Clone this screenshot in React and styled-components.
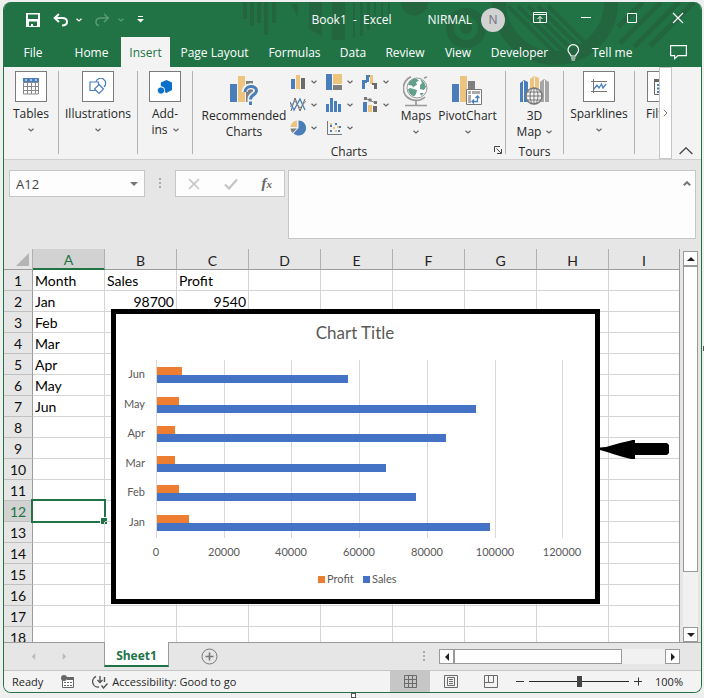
import React, { useState } from 'react'
import styled, { createGlobalStyle } from 'styled-components'

const GlobalStyle = createGlobalStyle`
  * { box-sizing: border-box; }
  body {
    margin: 0;
    background: #efefef;
    font-family: "Open Sans", "Noto Sans", sans-serif;
    font-size: 12px;
    color: #262626;
  }
  button, input, textarea { font: inherit; color: inherit; }
  button { padding: 0; border: 0; background: none; cursor: pointer; }
  svg { display: block; flex: none; }
`

const Page = styled.div`
  position: relative;
  display: flex;
  height: 100vh;
  padding: 2px 2px 5px 3px;
`

const Window = styled.div`
  flex: 1;
  min-width: 0;
  display: flex;
  flex-direction: column;
  border: 1px solid #217346;
  border-top: 0;
  border-radius: 8px;
  overflow: hidden;
  background: #e6e6e6;
`

/* ---------- title bar and tabs ---------- */

const Header = styled.header`
  position: relative;
  background: #217346;
  color: #fff;
`

const Decoration = styled.svg`
  position: absolute;
  top: 0;
  right: 0;
`

const TitleBar = styled.div`
  position: relative;
  display: flex;
  align-items: center;
  height: 35px;
  padding: 0 16px 0 22px;
`

const QuickAccess = styled.div`
  display: flex;
  align-items: center;
  gap: 6px;
  flex: 1;
`

const QuickButton = styled.button`
  display: flex;
  align-items: center;
  gap: 8px;
  margin-right: 7px;
  color: ${props => (props.$dim ? '#5b9a77' : '#fff')};
`

const DocTitle = styled.div`
  white-space: pre;
  margin-right: 36px;
`

const Account = styled.button`
  display: flex;
  align-items: center;
  gap: 9px;
  color: #fff;
`

const Avatar = styled.span`
  width: 24px;
  height: 24px;
  border-radius: 50%;
  background: #d2d2d2;
  color: #6b6f80;
  line-height: 24px;
`

const WindowButtons = styled.div`
  display: flex;
  gap: 32px;
  margin: 0 0 3px 28px;
`

const Tabs = styled.nav`
  position: relative;
  display: flex;
  align-items: stretch;
  height: 30px;
  padding: 0 14px 0 0;
`

const Tab = styled.button`
  width: ${props => props.$width}px;
  white-space: nowrap;
  color: ${props => (props.$active ? '#217346' : '#fff')};
  background: ${props => (props.$active ? '#f3f3f3' : 'transparent')};
`

const TellMe = styled.button`
  display: flex;
  align-items: center;
  gap: 12px;
  margin: 0 auto 0 10px;
  color: #fff;
`

/* ---------- ribbon ---------- */

const Ribbon = styled.div`
  display: flex;
  height: 93px;
  background: #f3f3f3;
  border-bottom: 1px solid #d0d0d0;
`

const Group = styled.section`
  display: flex;
  flex-direction: column;
  align-items: center;
  flex: none;
  width: ${props => props.$width}px;
  margin: 4px 0 5px;
  border-right: 1px solid #b2b2b2;
`

const LastGroup = styled.section`
  flex: 1;
  min-width: 0;
  overflow: hidden;
  margin-top: 4px;
  padding-left: 11px;
`

const GroupRow = styled.div`
  display: flex;
  flex: 1;
  align-self: stretch;
`

const GroupLabel = styled.div`
  position: relative;
  align-self: stretch;
  height: 12px;
  line-height: 20px;
  margin-top: -12px;
  text-align: center;
`

const Launcher = styled.button`
  position: absolute;
  right: 3px;
  top: 4px;
`

const BigButton = styled.button`
  display: flex;
  flex-direction: column;
  align-items: center;
  flex: none;
  width: ${props => (props.$width ? props.$width + 'px' : 'auto')};
  padding-top: ${props => (props.$plain ? 5 : 0)}px;
  padding-left: ${props => props.$indent || 0}px;
  line-height: 16px;
`

const IconBox = styled.span`
  display: grid;
  place-items: center;
  width: 32px;
  height: 31px;
  border: 1px solid #7b7b7b;
  background: #fff;
  margin-bottom: 4px;
`

const PlainIcon = styled.span`
  height: 32px;
`

const LabelLine = styled.span`
  display: flex;
  align-items: center;
  gap: 5px;
  min-height: 16px;
  white-space: nowrap;
`

const ChartTypes = styled.div`
  display: grid;
  grid-template-columns: repeat(3, 36px);
  grid-auto-rows: 23px;
  align-content: start;
  margin-top: -1px;
`

const SmallButton = styled.button`
  display: flex;
  align-items: center;
  gap: 5px;
`

const RibbonScroll = styled.button`
  width: 13px;
  flex: none;
  border: 1px solid #c6c6c6;
  background: #fff;
  display: grid;
  place-items: center;
`

const RibbonCollapse = styled.button`
  display: flex;
  align-items: flex-end;
  padding: 0 8px 4px 7px;
`

/* ---------- formula bar ---------- */

const FormulaBar = styled.div`
  display: flex;
  align-items: flex-start;
  height: 89px;
  padding: 10px 5px 0;
  color: #444;
`

const NameBox = styled.div`
  display: flex;
  align-items: center;
  width: 136px;
  height: 27px;
  padding-right: 6px;
  border: 1px solid #c6c6c6;
  background: #fdfdfd;
`

const NameInput = styled.input`
  flex: 1;
  min-width: 0;
  border: 0;
  outline: 0;
  padding: 0 6px;
  background: none;
  font-size: 13px;
`

const Grip = styled.svg`
  margin: 8px 14px;
`

const FormulaButtons = styled.div`
  display: flex;
  align-items: center;
  justify-content: space-between;
  width: 110px;
  height: 27px;
  padding: 0 12px;
  margin-right: 3px;
  border: 1px solid #c6c6c6;
  background: #fdfdfd;
`

const FxButton = styled.button`
  font: italic bold 15px "Liberation Serif", serif;
  color: #666;

  small { font-size: 11px; }
`

const FormulaField = styled.div`
  display: flex;
  flex: 1;
  align-items: flex-start;
  height: 69px;
  border: 1px solid #c6c6c6;
  background: #fdfdfd;

  textarea {
    flex: 1;
    min-width: 0;
    height: 100%;
    border: 0;
    outline: 0;
    resize: none;
    background: none;
  }
  button { padding: 10px 4px; }
`

/* ---------- sheet ---------- */

const SheetArea = styled.main`
  position: relative;
  display: flex;
  flex: 1;
  min-height: 0;
`

const GridClip = styled.div`
  flex: 1;
  min-width: 0;
  overflow: hidden;
  border-right: 1px solid #9b9b9b;
`

const Grid = styled.table`
  width: 100%;
  table-layout: fixed;
  border-collapse: separate;
  border-spacing: 0;
  background: #fff;
  color: #000;
  font-family: Lato, sans-serif;
  font-size: 14px;
  line-height: 18px;
`

const Corner = styled.th`
  width: 29px;
  height: 21px;
  padding: 0 3px 3px 0;
  vertical-align: bottom;
  background: #e6e6e6;
  border-right: 1px solid #b0b0b0;
  border-bottom: 1px solid #9b9b9b;

  svg { margin-left: auto; }
`

const ColHead = styled.th`
  width: ${props => (props.$last ? 'auto' : '72px')};
  height: 21px;
  padding: 2px 0 0;
  font-weight: 400;
  line-height: 17px;
  color: ${props => (props.$active ? '#217346' : '#222')};
  background: ${props => (props.$active ? '#d2d2d2' : '#e6e6e6')};
  border-right: ${props => (props.$last ? '0' : '1px solid #b0b0b0')};
  border-bottom: ${props => (props.$active ? '2px solid #217346' : '1px solid #9b9b9b')};
`

const RowHead = styled.th`
  height: 21px;
  padding: 2px 0 0;
  font-weight: 400;
  color: ${props => (props.$active ? '#217346' : '#111')};
  background: ${props => (props.$active ? '#d2d2d2' : '#e6e6e6')};
  border-right: 1px solid #9b9b9b;
  border-bottom: 1px solid #c0c0c0;
`

const Cell = styled.td`
  position: relative;
  height: 21px;
  padding: 2px 2px 0;
  text-align: ${props => (props.$number ? 'right' : 'left')};
  border-right: 1px solid #d4d4d4;
  border-bottom: 1px solid #d4d4d4;

  &:last-child { border-right: 0; }
`

const Selection = styled.div`
  position: absolute;
  inset: -2px;
  border: 2px solid #217346;

  &::after {
    content: "";
    position: absolute;
    right: -3px;
    bottom: -3px;
    width: 6px;
    height: 6px;
    background: #217346;
    border: solid #fff;
    border-width: 1px 0 0 1px;
  }
`

const ChartObject = styled.figure`
  position: absolute;
  left: 107px;
  top: 60px;
  margin: 0;
  border: 5px solid #000;
  background: #fff;
`

const ChartText = styled.text`
  font-family: Lato, sans-serif;
  font-size: ${props => props.$size || 11}px;
  fill: #595959;
`

const Pointer = styled.svg`
  position: absolute;
  left: 596px;
  top: 190px;
`

const Scroller = styled.div`
  display: flex;
  flex-direction: ${props => (props.$vertical ? 'column' : 'row')};
  background: #f1f1f1;
`

const VerticalSlot = styled.div`
  display: flex;
  width: 21px;
  padding: 2px 3px 0;

  ${Scroller} { width: 15px; }
`

const ScrollButton = styled.button`
  display: grid;
  place-items: center;
  width: 15px;
  height: 15px;
  border: 1px solid #999;
  background: #fff;
`

const Thumb = styled.div`
  flex: ${props => props.$size};
  border: 1px solid #999;
  background: #fff;
`

const Track = styled.div`
  flex: ${props => props.$size};
`

const SheetBar = styled.div`
  display: flex;
  align-items: center;
  height: 28px;
  padding-right: 21px;
  border-top: 1px solid #9b9b9b;
`

const SheetNav = styled.div`
  display: flex;
  gap: 24px;
  width: 100px;
  padding-left: 26px;
`

const SheetTab = styled.button`
  align-self: flex-start;
  width: 65px;
  height: 25px;
  margin-top: -1px;
  padding-top: 3px;
  background: #fff;
  border: solid #9b9b9b;
  border-width: 0 1px;
  border-bottom: 2px solid #217346;
  color: #217346;
  font-weight: 700;
`

const AddSheet = styled.button`
  margin: 0 auto 0 32px;
`

const HScroller = styled(Scroller)`
  width: 241px;
`

/* ---------- status bar ---------- */

const StatusBar = styled.footer`
  display: flex;
  align-items: center;
  height: 22px;
  border-top: 1px solid #c6c6c6;
  background: #f3f3f3;
  font-size: 11px;
  padding: 0 18px 0 8px;
  white-space: nowrap;
`

const StatusItem = styled.button`
  display: flex;
  align-items: center;
  gap: 4px;
  margin-right: 18px;
`

const Views = styled.div`
  display: flex;
  align-self: stretch;
  margin-left: auto;
`

const ViewButton = styled.button`
  display: grid;
  place-items: center;
  width: 40px;
  background: ${props => (props.$active ? '#c6c6c6' : 'transparent')};
`

const Zoom = styled.div`
  display: flex;
  align-items: center;
  gap: 4px;
  margin: 0 12px 0 5px;
`

const ZoomRange = styled.input`
  appearance: none;
  width: 100px;
  height: 12px;
  margin: 0;
  background: linear-gradient(#262626, #262626) center / 100% 1px no-repeat;

  &::-webkit-slider-thumb {
    appearance: none;
    width: 5px;
    height: 11px;
    background: #444;
  }
`

const EdgeHandle = styled.span`
  position: absolute;
  width: 5px;
  height: 5px;
  border: 1px solid #555;
  background: #fff;
  ${props => (props.$side === 'bottom' ? 'left: 50%; margin-left: -1px; bottom: 0;' : 'right: -4px; top: 346px;')}
`

/* ---------- icons ---------- */

const BLUE = '#4a7ebb'
const GOLD = '#edc47d'
const GRAY = '#7f7f7f'

const Chevron = ({ color = '#666' }) => (
  <svg width="6" height="4" viewBox="0 0 6 4" fill="none" stroke={color} strokeWidth="1.2">
    <path d="M.5 .7 3 3 5.5 .7" />
  </svg>
)

const Triangle = ({ dir, color = '#222', size = 8 }) => {
  const paths = {
    up: 'M0 6 4 2 8 6z',
    down: 'M0 2 4 6 8 2z',
    left: 'M6 0 2 4 6 8z',
    right: 'M2 0 6 4 2 8z',
  }
  return (
    <svg width={size} height={size} viewBox="0 0 8 8" fill={color}>
      <path d={paths[dir]} />
    </svg>
  )
}

const SaveIcon = () => (
  <svg width="14" height="14" viewBox="0 0 14 14">
    <path fill="#fff" fillRule="evenodd" d="M0 0h14v14H0zM2 1.5V6h10V1.5zM3 8.5V13h2v-2h2v2h4V8.5z" />
  </svg>
)

const UndoIcon = () => (
  <svg width="15" height="14" viewBox="0 0 15 14" fill="none" stroke="currentColor" strokeWidth="2">
    <path d="M6 1 1.7 5 6 9M2 5h7.2c3 0 4.8 1.5 4.8 3.8S12 12.5 9 12.5" />
  </svg>
)

const RedoIcon = () => (
  <svg width="15" height="14" viewBox="0 0 15 14" fill="none" stroke="currentColor" strokeWidth="1.5">
    <path d="M9 1 13.3 5 9 9M13 5H5.8C2.8 5 1 6.5 1 8.8S2.5 12.5 4 12.5" />
  </svg>
)

const TableIcon = () => (
  <svg width="16" height="17" viewBox="0 0 16 17">
    <path fill="#fff" stroke="#888" d="M.5 4.5h15v11.5H.5zM4.500 5v11M8.5 5v11M12.5 5v11M1 8.5h14M1 12.5h14" />
    <path fill={BLUE} d="M0 0h16v4H0z" />
    <path fill="#fff" d="M2 1.5h2v1H2zM7 1.5h2v1H7zM12 1.5h2v1h-2z" />
  </svg>
)

const ShapesIcon = () => (
  <svg width="18" height="17" viewBox="0 0 18 17" fill="#fff" stroke={BLUE} strokeWidth="1.2">
    <path d="M7 3.5A5 5 0 1 1 15 9" />
    <path d="M1 4h8.5v8.5H1z" />
    <path d="M10 6.5 14.5 11 10 15.5 5.5 11z" />
  </svg>
)

const AddinIcon = () => (
  <svg width="16" height="16" viewBox="0 0 16 16" fill="#0a70c8">
    <path d="M9.5 1 15 3.5V11l-5.5 3-2.5-1.5V9L3.8 7V3.5z" />
    <circle cx="4" cy="11.5" r="3.7" stroke="#fff" strokeWidth="1" />
  </svg>
)

const RecommendedIcon = () => (
  <svg width="29" height="30" viewBox="0 0 29 30">
    <path fill={BLUE} d="M0 8h7v18H0z" />
    <path fill={GOLD} d="M8 0h7v26H8z" />
    <path fill={GRAY} d="M16 5h7v21h-7z" />
    <g fill="none" stroke="#f3f3f3" strokeWidth="6">
      <path d="M14.5 16c0-7.500 12-7.500 12-1.500 0 4.500-6 4-6 8.5v6" />
    </g>
    <g fill="none" stroke={BLUE} strokeWidth="3">
      <path d="M15 16c0-7 11.500-7 11.500-1.500 0 4.500-6 4-6 9M20.500 25.500v3.500" />
    </g>
  </svg>
)

const ColumnIcon = () => (
  <svg width="16" height="16" viewBox="0 0 16 16">
    <path fill={BLUE} d="M1 5h4v10H1z" />
    <path fill={GOLD} d="M6 1h4v14H6z" />
    <path fill="#6b6b6b" d="M11 4h4v11h-4z" />
  </svg>
)

const TreemapIcon = () => (
  <svg width="16" height="16" viewBox="0 0 16 16">
    <path fill={BLUE} d="M0 0h6v16H0z" />
    <path fill={GOLD} d="M7 0h9v10H7z" />
    <path fill={GRAY} d="M7 11h9v5H7z" />
  </svg>
)

const WaterfallIcon = () => (
  <svg width="16" height="16" viewBox="0 0 16 16">
    <path fill={BLUE} d="M0 6h3v9H0zM3 6h2v3H3zM4 1h3v7H4z" />
    <path fill={GOLD} d="M8 1h3v9H8z" />
    <path fill="#6b6b6b" d="M7 1h1v2H7zM10 9h5v2h-5zM12 9h3v6h-3z" />
  </svg>
)

const LineIcon = () => (
  <svg width="16" height="16" viewBox="0 0 16 16" fill="none">
    <path stroke="#666" d="M1 14 5 1l5 13 5-12" />
    <path stroke={BLUE} strokeWidth="1.3" d="M0 5l4 8 6-11 5 11" />
    <path stroke="#888" d="M0 10l5-6 5 7 6-7" />
  </svg>
)

const HistogramIcon = () => (
  <svg width="16" height="16" viewBox="0 0 16 16" fill={BLUE}>
    <path d="M0 7h3v8H0zM4 1h3v14H4zM8 4h3v11H8zM12 7h3v8h-3z" />
  </svg>
)

const ComboIcon = () => (
  <svg width="16" height="16" viewBox="0 0 16 16">
    <path fill={BLUE} d="M1 5h4v10H1z" />
    <path fill={GOLD} d="M6 8h4v7H6z" />
    <path fill="#6b6b6b" d="M11 9h4v6h-4z" />
    <path fill="none" stroke="#777" d="M3 1.5 8 3 13 6" />
    <path fill="#777" d="M2 0h3v3H2zM6.500 1.5h3v3h-3zM12 4h3v3h-3z" />
  </svg>
)

const PieIcon = () => (
  <svg width="16" height="16" viewBox="0 0 16 16">
    <path fill={BLUE} d="M8.5 .5a7.5 7.5 0 1 1-5 13l5-5.5z" />
    <path fill={GOLD} d="M7 .5V7H.5A7 7 0 0 1 7 .5z" />
    <path fill={GRAY} d="M.5 8.5H7l-4.5 4.5a7 7 0 0 1-2-4.500z" />
  </svg>
)

const ScatterIcon = () => (
  <svg width="16" height="16" viewBox="0 0 16 16">
    <path fill="none" stroke="#777" d="M1.5 1v13.5H16" />
    <path fill={BLUE} d="M4 5h2v2H4zM9 3h2v2H9zM4 10h2v2H4zM12 10h2v2h-2zM13 6h2v2h-2z" />
    <path fill={GOLD} d="M4 3h2v2H4zM7 7h2v2H7zM11 6h2v2h-2zM9 10h2v2H9z" />
  </svg>
)

const GlobeIcon = () => (
  <svg width="26" height="32" viewBox="0 0 26 32">
    <path fill="none" stroke="#999" strokeWidth="1.7" d="M8 .8 5 2.500C-1.500 8-.5 17 4 21s13 5 18 0M13 25v5M2 29.500h22M21 2l3-1" />
    <circle cx="14" cy="12" r="10" fill="#fff" stroke="#999" />
    <path fill="#63a08a" d="M5 9q2-6 8-6.500l3 2-3 2 1 2-4 3-1-2zM17 3q5 2.500 6 8l-2 3-4-1 0-4 2-2zM7 12l7 2-1 4-2 2.500q-5-2-6-7zM17 17h4l-3 3z" />
  </svg>
)

const PivotIcon = () => (
  <svg width="31" height="30" viewBox="0 0 31 30">
    <path fill={BLUE} d="M0 8h7v18H0z" />
    <path fill={GOLD} d="M8 0h7v26H8z" />
    <path fill={GRAY} d="M16 5h7v10h-7z" />
    <path fill="#fff" stroke="#777" d="M14.5 13.5h15v15h-15z" />
    <path fill="#aaa" d="M16 15h3v3h-3zM20 15h8v3h-8zM16 19h3v8h-3z" />
    <path fill="none" stroke={BLUE} strokeWidth="1.3" d="M20 25.5h5.5V20M22 23.5l-2 2 2 2M23.5 22l2-2 2 2" />
  </svg>
)

const MapIcon = () => (
  <svg width="31" height="30" viewBox="0 0 31 30">
    <path fill={BLUE} d="M1 7l4-3 4 2v20H1z" />
    <path fill={GOLD} d="M11 3l4-3 5 2v22h-9z" />
    <path fill="#a5a5a5" d="M21 6l4-3 5 3v20h-9z" />
    <path stroke="#f3f3f3" d="M4.500 5v21M25.5 4v22M15.500 1v12" />
    <circle cx="15" cy="20" r="8" fill="#f3f3f3" stroke="#777" strokeWidth="1.4" />
    <path fill="none" stroke="#777" d="M15 12v16M7 20h16M8.5 16h13M8.5 24h13" />
    <ellipse cx="15" cy="20" rx="4" ry="8" fill="none" stroke="#777" />
  </svg>
)

const SparkIcon = () => (
  <svg width="18" height="16" viewBox="0 0 18 16" fill="none">
    <path stroke="#777" d="M3.5 0v14M1 2.5h16M1 12.5h16" />
    <path stroke={BLUE} strokeWidth="1.3" d="M4 10l3-4 2 3 2.5-4 1.5 4 3-4" />
  </svg>
)

const FilterIcon = () => (
  <svg width="18" height="16" viewBox="0 0 18 16" fill="none">
    <path stroke="#666" d="M.5 .5h12v15H.5z" />
    <path fill="#666" d="M0 0h13v3H0z" />
    <path stroke={BLUE} strokeWidth="2" d="M3 6h8M3 9.5h8M3 13h8" />
  </svg>
)

const ViewIcon = ({ d }) => (
  <svg width="15" height="14" viewBox="0 0 15 14" fill="none" stroke="#6b6b6b">
    <path d={d} />
  </svg>
)

const HeaderArt = () => (
  <Decoration width="462" height="65" viewBox="239 2 462 65" fill="#23653f">
    <path d="M243 2h4v17h-4zM250 2h4v24h-4zM257 2h4v21h-4zM264 2h4v33h-4zM272 2h4v21h-4zM291 4h7v13zM309 2h13v34l-13-7zM332 2h13v38h-13z" />
    <path d="M353 2h2v36h-2zM360 2h3v34h-3zM367 2h3v28h-3zM374 2h2v24h-2zM381 2h2v22h-2zM388 2h2v17h-2zM401 2h27a13.5 13.5 0 0 1-27 0z" />
    <circle cx="466" cy="28" r="16" fill="none" stroke="#23653f" strokeWidth="8" />
    <circle cx="466" cy="28" r="6" />
    <circle cx="555" cy="2" r="56" fill="none" stroke="#23653f" strokeWidth="14" />
    <path fill="none" stroke="#23653f" strokeWidth="4" d="M508 6 556 54M518 6 566 54M528 6 574 52M538 6 581 49M548 6 586 44" />
    <path fill="none" stroke="#23653f" strokeWidth="5" d="M643 2 618 27M661 2 620 43M679 2 634 47M694 2 650 46" />
  </Decoration>
)

/* ---------- data ---------- */

const tabs = [
  ['File', 58], ['Home', 59], ['Insert', 49], ['Page Layout', 89], ['Formulas', 71],
  ['Data', 46], ['Review', 58], ['View', 48], ['Developer', 75],
]

const months = ['Jan', 'Feb', 'Mar', 'Apr', 'May', 'Jun']
const sales = [98700, 76800, 68000, 85600, 94500, 56700]
const profit = [9540, 6500, 5300, 5300, 6500, 7400]

const columns = ['A', 'B', 'C', 'D', 'E', 'F', 'G', 'H', 'I']
const cells = {
  A1: 'Month', B1: 'Sales', C1: 'Profit',
  A2: 'Jan', B2: 98700, C2: 9540,
  A3: 'Feb', A4: 'Mar', A5: 'Apr', A6: 'May', A7: 'Jun',
}

const chartTypes = [
  ['Column', ColumnIcon], ['Hierarchy', TreemapIcon], ['Waterfall', WaterfallIcon],
  ['Line', LineIcon], ['Statistic', HistogramIcon], ['Combo', ComboIcon],
  ['Pie', PieIcon], ['Scatter', ScatterIcon],
]

const BarChart = () => {
  const x = value => 40 + Math.round((value * 67.7) / 20000)
  const ticks = [0, 20000, 40000, 60000, 80000, 100000, 120000]

  return (
    <svg width="479" height="285" viewBox="0 0 479 285">
      <ChartText x="239" y="25" $size={17} textAnchor="middle">Chart Title</ChartText>
      {ticks.map(tick => (
        <g key={tick}>
          <path stroke="#d9d9d9" d={`M${x(tick) + 0.5} 46V224`} />
          <ChartText x={x(tick)} y="242" textAnchor="middle">{tick}</ChartText>
        </g>
      ))}
      {months.map((month, i) => {
        const top = 201 - Math.round(i * 29.5)
        return (
          <g key={month}>
            <ChartText x="29" y={top + 11} textAnchor="end">{month}</ChartText>
            <rect x="41" y={top} width={x(profit[i]) - 40} height="8" fill="#ed7d31" />
            <rect x="41" y={top + 8} width={x(sales[i]) - 41} height="8" fill="#4472c4" />
          </g>
        )
      })}
      <rect x="202" y="262" width="7" height="7" fill="#ed7d31" />
      <ChartText x="211" y="269">Profit</ChartText>
      <rect x="247" y="262" width="7" height="7" fill="#4472c4" />
      <ChartText x="256" y="269">Sales</ChartText>
    </svg>
  )
}

const App = () => {
  const [activeTab, setActiveTab] = useState('Insert')
  const [active, setActive] = useState('A12')
  const [zoom, setZoom] = useState(100)
  const [formula, setFormula] = useState('')

  const activeCol = active[0]
  const activeRow = Number(active.slice(1))

  return (
    <Page>
      <GlobalStyle />
      <Window>
        <Header>
          <HeaderArt />
          <TitleBar>
            <QuickAccess>
              <QuickButton aria-label="Save"><SaveIcon /></QuickButton>
              <QuickButton aria-label="Undo"><UndoIcon /><Chevron color="#fff" /></QuickButton>
              <QuickButton aria-label="Redo" $dim><RedoIcon /><Chevron color="#5b9a77" /></QuickButton>
              <QuickButton aria-label="Customize">
                <svg width="7" height="7" viewBox="0 0 7 7" fill="#fff"><path d="M1 0h5v1H1zM0 3h7L3.5 6.5z" /></svg>
              </QuickButton>
            </QuickAccess>
            <DocTitle>Book1  -  Excel</DocTitle>
            <Account>NIRMAL <Avatar>N</Avatar></Account>
            <WindowButtons>
              <button aria-label="Ribbon display">
                <svg width="14" height="12" viewBox="0 0 14 12" fill="none" stroke="#fff"><path d="M.5 .5h13v10H.5zM1 2.5h12M7 10V4.5M4.5 7 7 4.5 9.5 7" /></svg>
              </button>
              <button aria-label="Minimize">
                <svg width="14" height="12" viewBox="0 0 14 12" stroke="#fff"><path d="M2 5.5h10" /></svg>
              </button>
              <button aria-label="Maximize">
                <svg width="14" height="12" viewBox="0 0 14 12" fill="none" stroke="#fff"><path d="M2.5 1.5h9v9h-9z" /></svg>
              </button>
              <button aria-label="Close">
                <svg width="14" height="12" viewBox="0 0 14 12" fill="none" stroke="#fff" strokeWidth="1.2"><path d="M2 1l10 10M12 1 2 11" /></svg>
              </button>
            </WindowButtons>
          </TitleBar>
          <Tabs>
            {tabs.map(([name, width]) => (
              <Tab key={name} $width={width} $active={name === activeTab} onClick={() => setActiveTab(name)}>
                {name}
              </Tab>
            ))}
            <TellMe>
              <svg width="13" height="17" viewBox="0 0 13 17" fill="none" stroke="#fff" strokeWidth="1.2">
                <path d="M4 12c0-2-3-3-3-6a5.3 5.3 0 0 1 10.6 0c0 3-3 4-3 6zM4 14h4.6M4.500 16h3.5" />
              </svg>
              Tell me
            </TellMe>
            <button aria-label="Comments">
              <svg width="17" height="16" viewBox="0 0 17 16" fill="none" stroke="#fff" strokeWidth="1.2">
                <path d="M.6 1.6h15.8v10H8l-3.4 3v-3h-4z" />
              </svg>
            </button>
          </Tabs>
        </Header>

        <Ribbon>
          <Group $width={55}>
            <BigButton>
              <IconBox><TableIcon /></IconBox>
              <LabelLine>Tables</LabelLine>
              <LabelLine><Chevron /></LabelLine>
            </BigButton>
          </Group>
          <Group $width={79}>
            <BigButton>
              <IconBox><ShapesIcon /></IconBox>
              <LabelLine>Illustrations</LabelLine>
              <LabelLine><Chevron /></LabelLine>
            </BigButton>
          </Group>
          <Group $width={55}>
            <BigButton>
              <IconBox><AddinIcon /></IconBox>
              <LabelLine>Add-</LabelLine>
              <LabelLine>ins <Chevron /></LabelLine>
            </BigButton>
          </Group>
          <Group $width={313}>
            <GroupRow>
              <BigButton $plain $width={97} $indent={5}>
                <PlainIcon><RecommendedIcon /></PlainIcon>
                <LabelLine>Recommended</LabelLine>
                <LabelLine>Charts</LabelLine>
              </BigButton>
              <ChartTypes>
                {chartTypes.map(([name, Icon]) => (
                  <SmallButton key={name} aria-label={name}><Icon /><Chevron /></SmallButton>
                ))}
              </ChartTypes>
              <BigButton $plain $width={36}>
                <PlainIcon><GlobeIcon /></PlainIcon>
                <LabelLine>Maps</LabelLine>
                <LabelLine><Chevron /></LabelLine>
              </BigButton>
              <BigButton $plain $width={67}>
                <PlainIcon><PivotIcon /></PlainIcon>
                <LabelLine>PivotChart</LabelLine>
                <LabelLine><Chevron /></LabelLine>
              </BigButton>
            </GroupRow>
            <GroupLabel>
              Charts
              <Launcher aria-label="All charts">
                <svg width="8" height="8" viewBox="0 0 8 8" fill="none" stroke="#444"><path d="M.5 6V.5H6M2.5 2.5 7 7M7.5 3v4.500H3" /></svg>
              </Launcher>
            </GroupLabel>
          </Group>
          <Group $width={58}>
            <GroupRow>
              <BigButton $plain $width={57}>
                <PlainIcon><MapIcon /></PlainIcon>
                <LabelLine>3D</LabelLine>
                <LabelLine>Map <Chevron /></LabelLine>
              </BigButton>
            </GroupRow>
            <GroupLabel>Tours</GroupLabel>
          </Group>
          <Group $width={71}>
            <BigButton>
              <IconBox><SparkIcon /></IconBox>
              <LabelLine>Sparklines</LabelLine>
              <LabelLine><Chevron /></LabelLine>
            </BigButton>
          </Group>
          <LastGroup>
            <BigButton>
              <IconBox><FilterIcon /></IconBox>
              <LabelLine>Filters</LabelLine>
            </BigButton>
          </LastGroup>
          <RibbonScroll aria-label="More groups">
            <svg width="5" height="8" viewBox="0 0 5 8" fill="none" stroke="#777"><path d="M.8 .8 4 4 .8 7.2" /></svg>
          </RibbonScroll>
          <RibbonCollapse aria-label="Collapse ribbon">
            <svg width="14" height="8" viewBox="0 0 14 8" fill="none" stroke="#444" strokeWidth="1.3"><path d="M.6 7 7 .8 13.4 7" /></svg>
          </RibbonCollapse>
        </Ribbon>

        <FormulaBar>
          <NameBox>
            <NameInput aria-label="Name box" value={active} readOnly />
            <button aria-label="Cell names"><Triangle dir="down" color="#777" /></button>
          </NameBox>
          <Grip width="2" height="11" viewBox="0 0 2 11" fill="#aaa">
            <path d="M0 0h2v2H0zM0 4h2v2H0zM0 8h2v2H0z" />
          </Grip>
          <FormulaButtons>
            <button aria-label="Cancel">
              <svg width="12" height="12" viewBox="0 0 12 12" stroke="#c4c4c4" strokeWidth="1.6"><path d="M1 1l10 10M11 1 1 11" /></svg>
            </button>
            <button aria-label="Enter">
              <svg width="14" height="12" viewBox="0 0 14 12" fill="none" stroke="#c4c4c4" strokeWidth="2.2"><path d="M1 6.5 5 10.5 13 1.5" /></svg>
            </button>
            <FxButton>f<small>x</small></FxButton>
          </FormulaButtons>
          <FormulaField>
            <textarea aria-label="Formula" value={formula} onChange={e => setFormula(e.target.value)} />
            <button aria-label="Collapse formula bar">
              <svg width="8" height="5" viewBox="0 0 8 5" fill="none" stroke="#777" strokeWidth="2"><path d="M.8 4.3 4 1.2 7.2 4.3" /></svg>
            </button>
          </FormulaField>
        </FormulaBar>

        <SheetArea>
          <GridClip>
            <Grid>
              <thead>
                <tr>
                  <Corner>
                    <svg width="13" height="13" viewBox="0 0 13 13" fill="#b4b4b4"><path d="M13 0v13H0z" /></svg>
                  </Corner>
                  {columns.map(col => (
                    <ColHead key={col} $active={col === activeCol} $last={col === 'I'}>{col}</ColHead>
                  ))}
                </tr>
              </thead>
              <tbody>
                {Array.from({ length: 18 }, (_, i) => i + 1).map(row => (
                  <tr key={row}>
                    <RowHead $active={row === activeRow}>{row}</RowHead>
                    {columns.map(col => {
                      const id = col + row
                      return (
                        <Cell key={id} $number={typeof cells[id] === 'number'} onClick={() => setActive(id)}>
                          {cells[id]}
                          {id === active && <Selection />}
                        </Cell>
                      )
                    })}
                  </tr>
                ))}
              </tbody>
            </Grid>
          </GridClip>
          <VerticalSlot>
            <Scroller $vertical>
              <ScrollButton aria-label="Scroll up"><Triangle dir="up" /></ScrollButton>
              <Thumb $size={307} />
              <Track $size={55} />
              <ScrollButton aria-label="Scroll down"><Triangle dir="down" /></ScrollButton>
            </Scroller>
          </VerticalSlot>
          <ChartObject>
            <BarChart />
          </ChartObject>
          <Pointer width="70" height="22" viewBox="0 0 70 22">
            <path d="M0 8.500 6 8 13 6 20 4 31 1.5 32 1h3v3h32l2 2v8l-2 2H35v4h-4l-8-2-10-3-6-2-7-2z" />
          </Pointer>
        </SheetArea>

        <SheetBar>
          <SheetNav>
            <Triangle dir="left" color="#bbb" size={7} />
            <Triangle dir="right" color="#bbb" size={7} />
          </SheetNav>
          <SheetTab>Sheet1</SheetTab>
          <AddSheet aria-label="New sheet">
            <svg width="17" height="17" viewBox="0 0 17 17" fill="none" stroke="#777">
              <circle cx="8.5" cy="8.5" r="7.5" />
              <path strokeWidth="1.6" d="M8.5 4.5v8M4.500 8.5h8" />
            </svg>
          </AddSheet>
          <Grip width="2" height="11" viewBox="0 0 2 11" fill="#aaa">
            <path d="M0 0h2v2H0zM0 4h2v2H0zM0 8h2v2H0z" />
          </Grip>
          <HScroller>
            <ScrollButton aria-label="Scroll left"><Triangle dir="left" /></ScrollButton>
            <Thumb $size={168} />
            <Track $size={43} />
            <ScrollButton aria-label="Scroll right"><Triangle dir="right" /></ScrollButton>
          </HScroller>
        </SheetBar>

        <StatusBar>
          <StatusItem>Ready</StatusItem>
          <StatusItem aria-label="Record macro">
            <svg width="13" height="13" viewBox="0 0 13 13">
              <path fill="#fff" stroke="#666" d="M1.5 2.5h11v10h-11z" />
              <path fill="#666" d="M6 2h7v3H6zM3 7h2v1H3zM6 7h2v1H6zM9 7h2v1H9zM3 10h2v1H3zM6 10h2v1H6zM9 10h2v1H9z" />
              <circle cx="3" cy="3" r="3" fill="#666" />
            </svg>
          </StatusItem>
          <StatusItem>
            <svg width="16" height="14" viewBox="0 0 16 14" fill="none" stroke="#555" strokeWidth="1.4">
              <path d="M4 1.5a5.5 5.5 0 0 0 3 10.5M8 1v6M5.5 5 8 7.5 10.5 5M12.5 2v5M9.5 10.5l2 2.5 4-4.500" />
            </svg>
            Accessibility: Good to go
          </StatusItem>
          <Views>
            <ViewButton aria-label="Normal" $active><ViewIcon d="M1.5 .5h12v12h-12zM5.5 .5v12M9.5 .5v12M1.5 4.5h12M1.5 8.5h12" /></ViewButton>
            <ViewButton aria-label="Page layout"><ViewIcon d="M1.5 .5h13v12h-13zM4.5 2.5h7v8h-7zM6 4.5h4M6 6.5h4M6 8.5h4" /></ViewButton>
            <ViewButton aria-label="Page break preview"><ViewIcon d="M1.5 .5h13v12h-13zM5.5 .5v7M10.5 .5v7M1.5 7.5h9" /></ViewButton>
          </Views>
          <Zoom>
            <button aria-label="Zoom out"><svg width="10" height="9" viewBox="0 0 10 9" stroke="#333"><path d="M1 4.5h8" /></svg></button>
            <ZoomRange type="range" aria-label="Zoom" min="0" max="200" value={zoom} onChange={e => setZoom(Number(e.target.value))} />
            <button aria-label="Zoom in"><svg width="10" height="9" viewBox="0 0 10 9" stroke="#333"><path d="M1 4.5h8M5.5 .5v8" /></svg></button>
          </Zoom>
          {zoom}%
        </StatusBar>
      </Window>
      <EdgeHandle $side="bottom" />
      <EdgeHandle $side="right" />
    </Page>
  )
}

export default App
